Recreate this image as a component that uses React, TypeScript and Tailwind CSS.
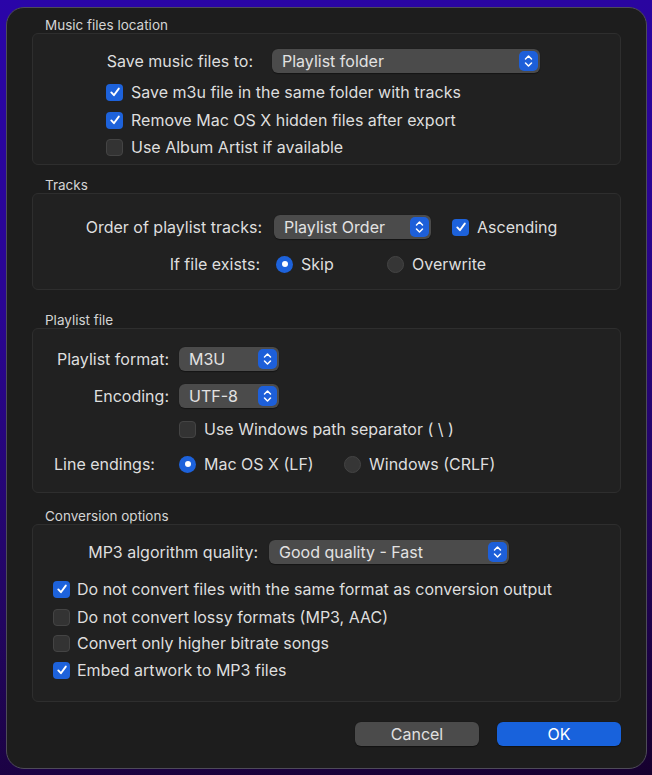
import React from 'react';

const font = { fontFamily: 'Inter, "Noto Sans", sans-serif' };

const Check: React.FC<{ checked?: boolean }> = ({ checked }) =>
  checked ? (
    <span className="flex h-[17px] w-[17px] shrink-0 items-center justify-center rounded-[4px] bg-[#1d62db]">
      <svg width="12" height="12" viewBox="0 0 12 12" fill="none">
        <path d="M2.3 6.4 L4.9 9.2 L9.8 2.6" stroke="white" strokeWidth="1.9" strokeLinecap="round" strokeLinejoin="round" />
      </svg>
    </span>
  ) : (
    <span className="h-[17px] w-[17px] shrink-0 rounded-[4px] border border-[#444] bg-[#333]" />
  );

const Radio: React.FC<{ on?: boolean }> = ({ on }) =>
  on ? (
    <span className="flex h-[17px] w-[17px] shrink-0 items-center justify-center rounded-full bg-[#1d62db]">
      <span className="h-[6px] w-[6px] rounded-full bg-white" />
    </span>
  ) : (
    <span className="h-[17px] w-[17px] shrink-0 rounded-full border border-[#444] bg-[#363636]" />
  );

// popup button with the blue up/down stepper on the right
const Popup: React.FC<{ value: string; width: string }> = ({ value, width }) => (
  <div className={`flex h-[24px] ${width} items-center justify-between rounded-[6px] bg-[#4b4b4b] pl-[10px] pr-[2px] shadow-[0_0.5px_1px_rgba(0,0,0,0.4)]`}>
    <span className="text-[16px] text-[#e2e2e2]">{value}</span>
    <span className="flex h-[20px] w-[19px] items-center justify-center rounded-[5px] bg-[#1d5fd9]">
      <svg width="9" height="14" viewBox="0 0 9 14" fill="none">
        <path d="M1.5 5 L4.5 2 L7.5 5" stroke="white" strokeWidth="1.5" strokeLinecap="round" strokeLinejoin="round" />
        <path d="M1.5 9 L4.5 12 L7.5 9" stroke="white" strokeWidth="1.5" strokeLinecap="round" strokeLinejoin="round" />
      </svg>
    </span>
  </div>
);

const Section: React.FC<{ title: string; height: string; gap: string; children: React.ReactNode }> = ({ title, height, gap, children }) => (
  <div className={gap}>
    <div className="h-[16px] pl-[13px] text-[13.5px] leading-[16px] text-[#d4d4d4]">{title}</div>
    <div className={`flex ${height} flex-col rounded-[6px] border border-[#2e2e2e] bg-[#212121]`}>{children}</div>
  </div>
);

export default function App() {
  return (
    <div
      className="h-[775px] w-[652px] overflow-hidden bg-[linear-gradient(170deg,#2a05a8_0%,#2a0592_35%,#220560_70%,#16002e_100%)] pl-[6px] pt-[7px]"
      style={font}
    >
      <div className="flex h-[762px] w-[641px] flex-col rounded-[18px] border border-[#4e4b58] bg-[#1d1d1d] px-[25px] pt-[9px] text-[16px] text-[#dedede]">
        {/* Music files location */}
        <Section title="Music files location" height="h-[132px]" gap="">
          <div className="mt-[15px] flex h-[24px] items-center pl-[73px]">
            <span className="w-[147px] text-right">Save music files to:</span>
            <span className="ml-[19px]">
              <Popup value="Playlist folder" width="w-[268px]" />
            </span>
          </div>
          <label className="mt-[9px] flex h-[20px] items-center gap-[8px] pl-[73px]">
            <Check checked />
            <span>Save m3u file in the same folder with tracks</span>
          </label>
          <label className="mt-[8px] flex h-[20px] items-center gap-[8px] pl-[73px]">
            <Check checked />
            <span>Remove Mac OS X hidden files after export</span>
          </label>
          <label className="mt-[7px] flex h-[20px] items-center gap-[8px] pl-[73px]">
            <Check />
            <span>Use Album Artist if available</span>
          </label>
        </Section>

        {/* Tracks */}
        <Section title="Tracks" height="h-[97px]" gap="mt-[12px]">
          <div className="mt-[21px] flex h-[24px] items-center">
            <span className="w-[229px] text-right">Order of playlist tracks:</span>
            <span className="ml-[12px]">
              <Popup value="Playlist Order" width="w-[157px]" />
            </span>
            <label className="ml-[21px] flex items-center gap-[8px]">
              <Check checked />
              <span>Ascending</span>
            </label>
          </div>
          <div className="mt-[15px] flex h-[20px] items-center">
            <span className="w-[227px] text-right">If file exists:</span>
            <label className="ml-[16px] flex w-[111px] items-center gap-[8px]">
              <Radio on />
              <span>Skip</span>
            </label>
            <label className="flex items-center gap-[8px]">
              <Radio />
              <span>Overwrite</span>
            </label>
          </div>
        </Section>

        {/* Playlist file */}
        <Section title="Playlist file" height="h-[165px]" gap="mt-[22px]">
          <div className="mt-[18px] flex h-[24px] items-center">
            <span className="w-[136px] text-right">Playlist format:</span>
            <span className="ml-[10px]">
              <Popup value="M3U" width="w-[100px]" />
            </span>
          </div>
          <div className="mt-[13px] flex h-[24px] items-center">
            <span className="w-[136px] text-right">Encoding:</span>
            <span className="ml-[10px]">
              <Popup value="UTF-8" width="w-[100px]" />
            </span>
          </div>
          <label className="mt-[11px] flex h-[20px] items-center gap-[8px] pl-[146px]">
            <Check />
            <span>Use Windows path separator ( \ )</span>
          </label>
          <div className="mt-[15px] flex h-[20px] items-center">
            <span className="w-[146px] pl-[21px]">Line endings:</span>
            <label className="flex w-[165px] items-center gap-[8px]">
              <Radio on />
              <span>Mac OS X (LF)</span>
            </label>
            <label className="flex items-center gap-[8px]">
              <Radio />
              <span>Windows (CRLF)</span>
            </label>
          </div>
        </Section>

        {/* Conversion options */}
        <Section title="Conversion options" height="h-[178px]" gap="mt-[15px]">
          <div className="mt-[15px] flex h-[24px] items-center">
            <span className="w-[225px] text-right">MP3 algorithm quality:</span>
            <span className="ml-[11px]">
              <Popup value="Good quality - Fast" width="w-[240px]" />
            </span>
          </div>
          <label className="mt-[15px] flex h-[20px] items-center gap-[7px] pl-[20px]">
            <Check checked />
            <span>Do not convert files with the same format as conversion output</span>
          </label>
          <label className="mt-[8px] flex h-[20px] items-center gap-[7px] pl-[20px]">
            <Check />
            <span>Do not convert lossy formats (MP3, AAC)</span>
          </label>
          <label className="mt-[6px] flex h-[20px] items-center gap-[7px] pl-[20px]">
            <Check />
            <span>Convert only higher bitrate songs</span>
          </label>
          <label className="mt-[7px] flex h-[20px] items-center gap-[7px] pl-[20px]">
            <Check checked />
            <span>Embed artwork to MP3 files</span>
          </label>
        </Section>

        <div className="mt-[20px] flex justify-end gap-[18px]">
          <button className="h-[24px] w-[124px] rounded-[6px] bg-[#4b4b4b] text-[16px] text-[#e0e0e0] shadow-[0_0.5px_1px_rgba(0,0,0,0.4)]">
            Cancel
          </button>
          <button className="h-[24px] w-[124px] rounded-[6px] bg-[#1862dc] text-[16px] text-white shadow-[0_0.5px_1px_rgba(0,0,0,0.4)]">
            OK
          </button>
        </div>
      </div>
    </div>
  );
}
